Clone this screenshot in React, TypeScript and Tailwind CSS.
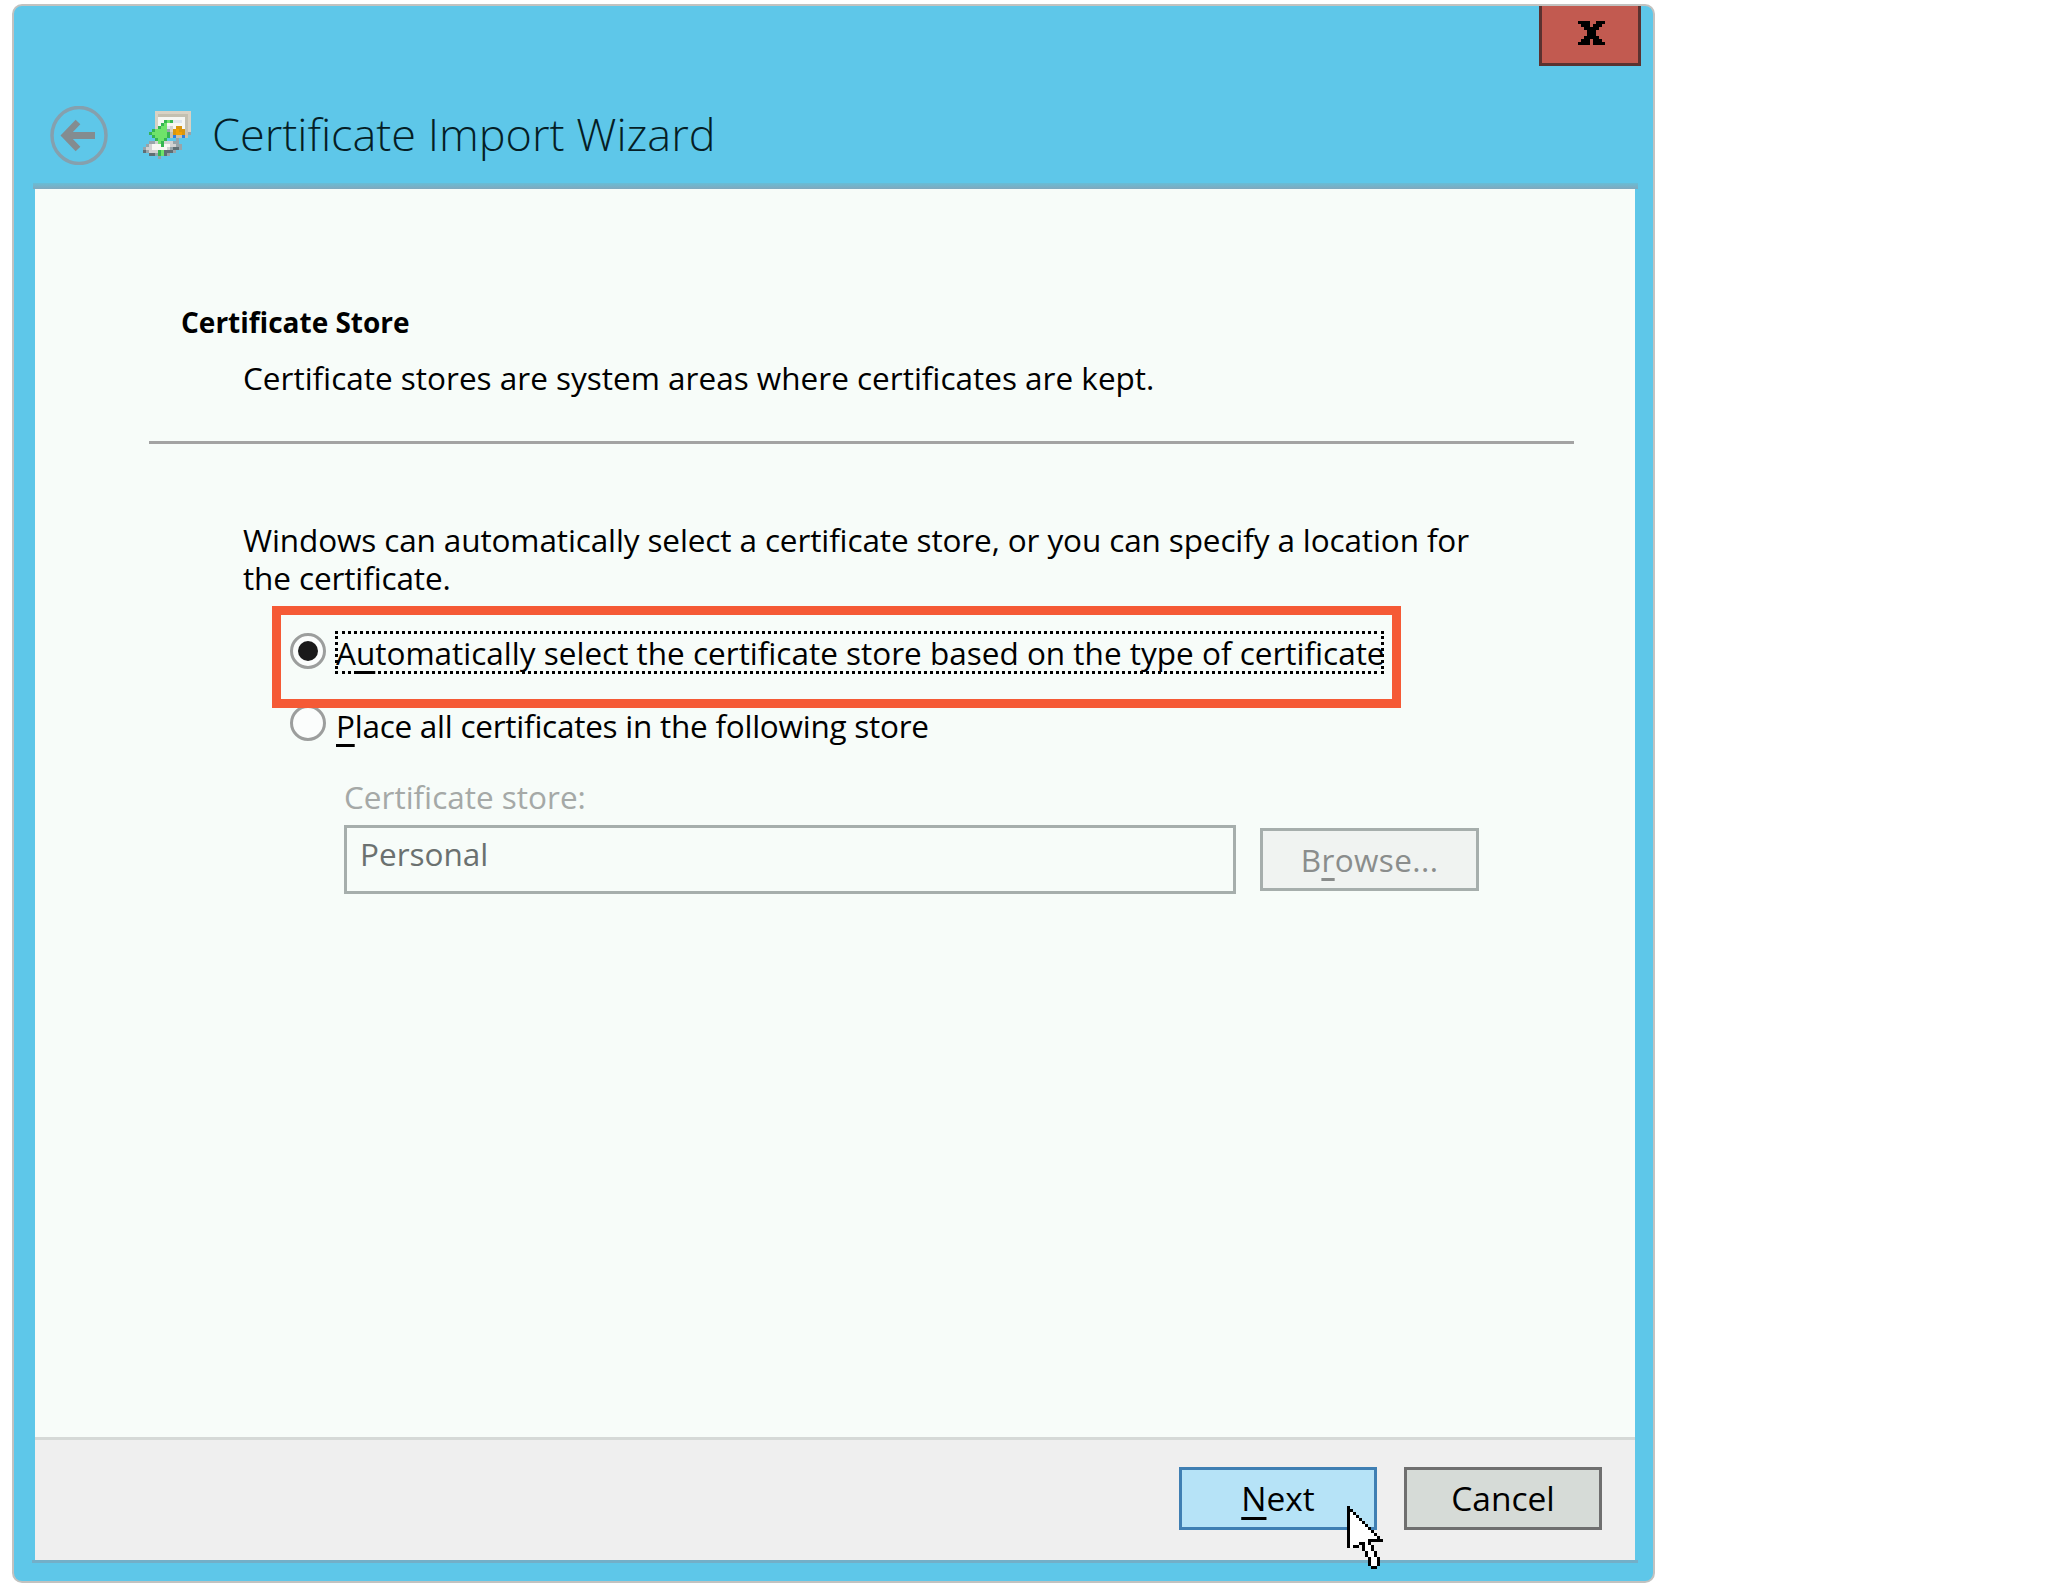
const uiFont = 'font-["Open_Sans","Noto_Sans",sans-serif]';

const closeGlyph = [
  'XXXX..XXX',
  '.XXX.XXX.',
  '..XXXXX..',
  '...XXX...',
  '...XXX...',
  '..XXXXX..',
  '.XXX.XXX.',
  'XXXX.XXXX',
];

const cursorRows = [
  'X...........',
  'XX..........',
  'XwX.........',
  'XwwX........',
  'XwwwX.......',
  'XwwwwX......',
  'XwwwwwX.....',
  'XwwwwwwX....',
  'XwwwwwwwX...',
  'XwwwwwwwwX..',
  'XwwwwwwwwwX.',
  'XwwwwwwXXXXX',
  'XwwwXXwX....',
  'XwXX.XwwX...',
  '.....XwwX...',
  '......XwwX..',
  '......XwwX..',
  '.......XwwX.',
  '.......XwwX.',
  '.......XwwX.',
  '........XX..',
];

const certRows = [
  '....tttttttttttt',
  '....tsssssssssst',
  '....twwwwwwwwwst',
  '....twwGgGlllwst',
  '....twGgwwwwwwst',
  '....tGgglcwoowst',
  '...GggggdtoOoost',
  '..GgggggGsoOOosd',
  '...GggggGsbssbs.',
  '....GggG...d....',
  '..ddcgGcccdd....',
  '.dcwwwGwwccdd...',
  'dccwwwwwcdDDd...',
  'DdcccGgDDDd.....',
  '..DDdGgDd.......',
  '.....d..........',
];

const certColors: Record<string, string> = {
  t: '#d8d2c4',
  s: '#c4c0b0',
  w: '#f6f7f3',
  g: '#6fe36a',
  G: '#35b552',
  l: '#dfe6ec',
  c: '#d2d2d2',
  d: '#97a4aa',
  D: '#5f6e74',
  o: '#d9960e',
  O: '#f4a000',
  b: '#2c7fe0',
};

function PixelArt({ rows, colors, cell }: { rows: string[]; colors: Record<string, string>; cell: number }) {
  return (
    <svg
      width={rows[0].length * cell}
      height={rows.length * cell}
      viewBox={`0 0 ${rows[0].length} ${rows.length}`}
      shapeRendering="crispEdges"
      className="block"
    >
      {rows.map((row, y) =>
        row.split('').map((ch, x) =>
          colors[ch] ? <rect key={`${x}-${y}`} x={x} y={y} width={1} height={1} fill={colors[ch]} /> : null,
        ),
      )}
    </svg>
  );
}

function BackIcon() {
  return (
    <svg width="58" height="59" viewBox="0 0 58 59" fill="none" className="block">
      <ellipse cx="29" cy="29.5" rx="27" ry="28" stroke="#85a0ae" strokeWidth="3.5" />
      <path d="M45 29.5H18" stroke="#848c90" strokeWidth="7" />
      <path d="M28 16L15 29.5L28 43" stroke="#848c90" strokeWidth="6.5" />
    </svg>
  );
}

function Radio({ checked }: { checked?: boolean }) {
  return (
    <div className="w-[36px] h-[36px] shrink-0 rounded-full border-[3px] border-[#9c9e9d] bg-[#fbfdfc] flex items-center justify-center">
      {checked && <div className="w-[20px] h-[20px] rounded-full bg-[#1a1a1a]" />}
    </div>
  );
}

export default function App() {
  return (
    <div className={`w-[2060px] h-[1590px] bg-white pl-[12px] pt-[4px] text-black ${uiFont}`}>
      <div className="w-[1643px] h-[1579px] rounded-[10px] border-2 border-[#c2c2c0] bg-[#5ec7e9] flex flex-col overflow-hidden">
        {/* Title bar */}
        <div className="h-[177px] shrink-0 flex flex-col">
          <div className="flex justify-end pr-[12px]">
            <div className="w-[102px] h-[60px] border-[3px] border-t-0 border-[#5a3230] bg-[#c25a50] flex items-center justify-center pl-[3px] pb-[4px]">
              <PixelArt rows={closeGlyph} colors={{ X: '#000000' }} cell={3} />
            </div>
          </div>
          <div className="flex items-center pl-[36px] mt-[38px]">
            <BackIcon />
            <div className="ml-[35px] mb-[1px]">
              <PixelArt rows={certRows} colors={certColors} cell={3} />
            </div>
            <div className="ml-[21px] text-[45px] leading-[60px] font-light text-[#051e26] mb-[2px]">Certificate Import Wizard</div>
          </div>
        </div>
        <div className="h-[6px] shrink-0 ml-[19px] mr-[15px] bg-gradient-to-b from-[#67bdd6] to-[#7fa8bd]" />

        {/* Panel */}
        <div className="flex-1 ml-[21px] mr-[18px] flex flex-col min-h-0">
          <div className="flex-1 bg-[#f7fcf9] pt-[114px] text-[31.5px] leading-[38px]">
            <div className="pl-[146px] text-[28px] leading-[38px] font-bold">Certificate Store</div>
            <div className="pl-[208px] mt-[18px]">Certificate stores are system areas where certificates are kept.</div>
            <div className="h-[3px] bg-[#a3a3a3] ml-[114px] mr-[61px] mt-[44px]" />
            <div className="pl-[208px] mt-[77px] w-[1450px] tracking-[-0.12px]">
              Windows can automatically select a certificate store, or you can specify a location for the certificate.
            </div>

            <div className="relative pl-[255px] mt-[34px]">
              {/* Red highlight */}
              <div className="absolute left-[237px] top-[-25px] w-[1129px] h-[102px] border-[9px] border-[#f55a36]" />
              <div className="flex items-start">
                <div className="mt-[2px]"><Radio checked /></div>
                <div className="ml-[9px] h-[43px] w-[1049px] whitespace-nowrap border-[3px] border-dotted border-black flex items-center">
                  <span className="-ml-[2px]">
                    A<u className="underline decoration-[3px] underline-offset-[6px]">u</u>tomatically select the certificate store based on the type of certificate
                  </span>
                </div>
              </div>
              <div className="flex items-start mt-[33px]">
                <div className="-mt-[2px]"><Radio /></div>
                <div className="ml-[10px] whitespace-nowrap leading-[38px] tracking-[-0.25px]">
                  <u className="underline decoration-[3px] underline-offset-[6px]">P</u>lace all certificates in the following store
                </div>
              </div>
              <div className="pl-[54px] mt-[33px]">
                <div className="text-[#a5a9a7] leading-[38px]">Certificate store:</div>
                <div className="flex items-start mt-[9px]">
                  <div className="w-[892px] h-[69px] border-[3px] border-[#a6aeac] text-[#6b7170] pl-[13px] pt-[7px]">Personal</div>
                  <div className="ml-[24px] mt-[3px] w-[219px] h-[63px] border-[3px] border-[#a6aeac] bg-[#f0f3f1] text-[#8a8d8c] flex items-center justify-center tracking-[0.4px]">
                    B<u className="underline decoration-[3px] underline-offset-[6px]">r</u>owse...
                  </div>
                </div>
              </div>
            </div>
          </div>

          {/* Footer */}
          <div className="relative h-[123px] shrink-0 border-t-[3px] border-[#d5d9d7] bg-[#efefef] flex justify-end gap-[27px] pt-[27px] pr-[33px] text-[33.5px]">
            <div className="w-[198px] h-[63px] border-[3px] border-[#3f7fb3] bg-[#b6e3f7] flex items-center justify-center">
              <u className="underline decoration-[3px] underline-offset-[6px]">N</u>ext
            </div>
            <div className="w-[198px] h-[63px] border-[3px] border-[#6f6f6f] bg-[#d6dbd7] flex items-center justify-center">Cancel</div>
            <div className="absolute left-[1312px] top-[66px] z-10">
              <PixelArt rows={cursorRows} colors={{ X: '#000000', w: '#ffffff' }} cell={3} />
            </div>
          </div>
        </div>
        <div className="h-[3px] shrink-0 ml-[18px] mr-[15px] bg-[#73afc8]" />
        <div className="h-[18px] shrink-0" />
      </div>
    </div>
  );
}
